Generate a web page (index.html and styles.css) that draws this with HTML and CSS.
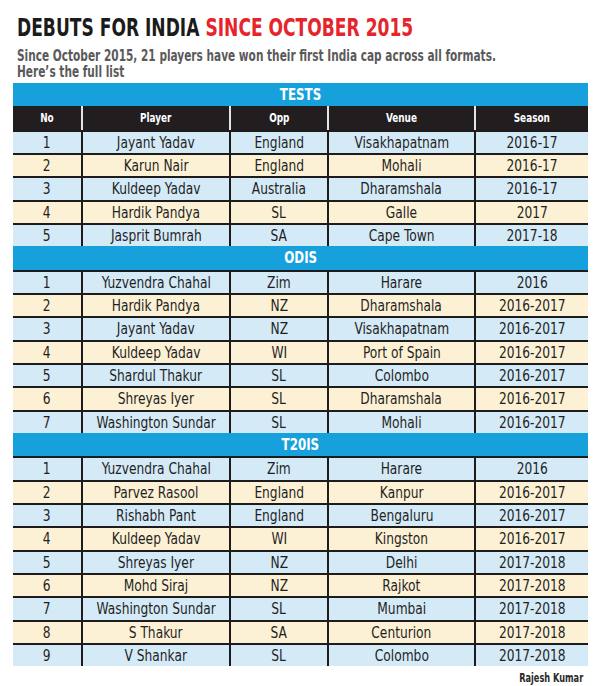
FILE: index.html
```html
<!DOCTYPE html>
<html>
<head>
<meta charset="utf-8">
<link rel="stylesheet" href="styles.css">
</head>
<body>
<div class="page">
  <h1 class="title">DEBUTS FOR INDIA <span class="red">SINCE OCTOBER 2015</span></h1>
  <p class="sub">Since October 2015, 21 players have won their first India cap across all formats. Here’s the full list</p>
  <div class="table">
    <div class="bar"><span>TESTS</span></div>
    <div class="row head"><div><span>No</span></div><div><span>Player</span></div><div><span>Opp</span></div><div><span>Venue</span></div><div><span>Season</span></div></div>
    <div class="row a"><div><span>1</span></div><div><span>Jayant Yadav</span></div><div><span>England</span></div><div><span>Visakhapatnam</span></div><div><span>2016-17</span></div></div>
    <div class="row b"><div><span>2</span></div><div><span>Karun Nair</span></div><div><span>England</span></div><div><span>Mohali</span></div><div><span>2016-17</span></div></div>
    <div class="row a"><div><span>3</span></div><div><span>Kuldeep Yadav</span></div><div><span>Australia</span></div><div><span>Dharamshala</span></div><div><span>2016-17</span></div></div>
    <div class="row b"><div><span>4</span></div><div><span>Hardik Pandya</span></div><div><span>SL</span></div><div><span>Galle</span></div><div><span>2017</span></div></div>
    <div class="row a"><div><span>5</span></div><div><span>Jasprit Bumrah</span></div><div><span>SA</span></div><div><span>Cape Town</span></div><div><span>2017-18</span></div></div>
    <div class="bar"><span>ODIS</span></div>
    <div class="row a"><div><span>1</span></div><div><span>Yuzvendra Chahal</span></div><div><span>Zim</span></div><div><span>Harare</span></div><div><span>2016</span></div></div>
    <div class="row b"><div><span>2</span></div><div><span>Hardik Pandya</span></div><div><span>NZ</span></div><div><span>Dharamshala</span></div><div><span>2016-2017</span></div></div>
    <div class="row a"><div><span>3</span></div><div><span>Jayant Yadav</span></div><div><span>NZ</span></div><div><span>Visakhapatnam</span></div><div><span>2016-2017</span></div></div>
    <div class="row b"><div><span>4</span></div><div><span>Kuldeep Yadav</span></div><div><span>WI</span></div><div><span>Port of Spain</span></div><div><span>2016-2017</span></div></div>
    <div class="row a"><div><span>5</span></div><div><span>Shardul Thakur</span></div><div><span>SL</span></div><div><span>Colombo</span></div><div><span>2016-2017</span></div></div>
    <div class="row b"><div><span>6</span></div><div><span>Shreyas Iyer</span></div><div><span>SL</span></div><div><span>Dharamshala</span></div><div><span>2016-2017</span></div></div>
    <div class="row a"><div><span>7</span></div><div><span>Washington Sundar</span></div><div><span>SL</span></div><div><span>Mohali</span></div><div><span>2016-2017</span></div></div>
    <div class="bar"><span>T20IS</span></div>
    <div class="row a"><div><span>1</span></div><div><span>Yuzvendra Chahal</span></div><div><span>Zim</span></div><div><span>Harare</span></div><div><span>2016</span></div></div>
    <div class="row b"><div><span>2</span></div><div><span>Parvez Rasool</span></div><div><span>England</span></div><div><span>Kanpur</span></div><div><span>2016-2017</span></div></div>
    <div class="row a"><div><span>3</span></div><div><span>Rishabh Pant</span></div><div><span>England</span></div><div><span>Bengaluru</span></div><div><span>2016-2017</span></div></div>
    <div class="row b"><div><span>4</span></div><div><span>Kuldeep Yadav</span></div><div><span>WI</span></div><div><span>Kingston</span></div><div><span>2016-2017</span></div></div>
    <div class="row a"><div><span>5</span></div><div><span>Shreyas Iyer</span></div><div><span>NZ</span></div><div><span>Delhi</span></div><div><span>2017-2018</span></div></div>
    <div class="row b"><div><span>6</span></div><div><span>Mohd Siraj</span></div><div><span>NZ</span></div><div><span>Rajkot</span></div><div><span>2017-2018</span></div></div>
    <div class="row a"><div><span>7</span></div><div><span>Washington Sundar</span></div><div><span>SL</span></div><div><span>Mumbai</span></div><div><span>2017-2018</span></div></div>
    <div class="row b"><div><span>8</span></div><div><span>S Thakur</span></div><div><span>SA</span></div><div><span>Centurion</span></div><div><span>2017-2018</span></div></div>
    <div class="row a"><div><span>9</span></div><div><span>V Shankar</span></div><div><span>SL</span></div><div><span>Colombo</span></div><div><span>2017-2018</span></div></div>
  </div>
  <div class="credit"><span>Rajesh Kumar</span></div>
</div>
</body>
</html>
```
FILE: styles.css
```css
html, body {
  margin: 0;
  padding: 0;
  background: #ffffff;
}
.page {
  width: 600px;
  height: 686px;
  overflow: hidden;
  font-family: "DejaVu Sans Condensed", "DejaVu Sans", sans-serif;
  font-stretch: condensed;
}
.title {
  margin: 0;
  padding: 14px 0 0 17px;
  font-size: 25px;
  line-height: 28px;
  font-weight: bold;
  white-space: nowrap;
  color: #1b1b1b;
  transform: scaleX(0.76);
  transform-origin: 17px 0;
}
.red {
  color: #e5242b;
}
.sub {
  margin: 6px 0 0 17px;
  width: 640px;
  font-size: 15.5px;
  line-height: 16px;
  font-weight: bold;
  color: #5a5a5a;
  transform: scaleX(0.757);
  transform-origin: 0 0;
}
.table {
  margin: 3px 0 0 13px;
  width: 575px;
}
.bar {
  height: 23.34px;
  background: #17a1dc;
  color: #ffffff;
  font-weight: bold;
  font-size: 15px;
  display: flex;
  align-items: center;
  justify-content: center;
}
.bar span {
  display: inline-block;
  transform: scaleX(0.88);
}
.row {
  display: grid;
  grid-template-columns: 68px 148px 98px 147px 114px;
  height: 23.34px;
  box-sizing: border-box;
  color: #1f1f1f;
  font-size: 16px;
}
.row > div {
  display: flex;
  align-items: center;
  justify-content: center;
  white-space: nowrap;
}
.row > div > span {
  display: inline-block;
  transform: scaleX(0.85);
}
.row > div + div {
  border-left: 2px solid #1e1b1c;
}
.row.a, .row.b {
  border-top: 2px solid #1e1b1c;
}
.row.a { background: #d4eaf7; }
.row.b { background: #fcf1d4; }
.row.head {
  background: #221e1f;
  color: #ffffff;
  font-weight: bold;
  font-size: 13px;
}
.row.head > div > span {
  transform: scaleX(0.76);
}
.row.head > div + div {
  border-left: 2px solid #e4e4e4;
}
.credit {
  width: 583px;
  text-align: right;
  margin-top: 5px;
  font-size: 12px;
  font-weight: bold;
  color: #2a2a2a;
}
.credit span {
  display: inline-block;
  transform: scaleX(0.76);
  transform-origin: right center;
}
```
